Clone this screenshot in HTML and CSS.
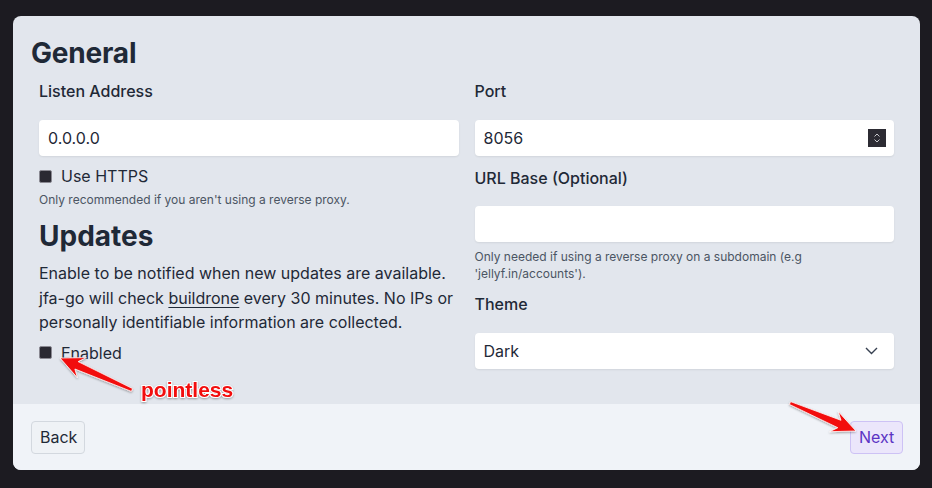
FILE: index.html
```html
<!DOCTYPE html>
<html>
<head>
<meta charset="utf-8">
<link rel="stylesheet" href="styles.css">
</head>
<body>
<div class="card">
  <div class="main">
    <h1 class="title">General</h1>
    <div class="cols">
      <div class="col">
        <div class="label">Listen Address</div>
        <div class="input">0.0.0.0</div>
        <div class="check-row"><span class="box"></span><span>Use HTTPS</span></div>
        <div class="help">Only recommended if you aren't using a reverse proxy.</div>
        <h2 class="section">Updates</h2>
        <p class="para">Enable to be notified when new updates are available. jfa-go will check <u>buildrone</u> every 30 minutes. No IPs or personally identifiable information are collected.</p>
        <div class="check-row check-en"><span class="box"></span><span>Enabled</span></div>
      </div>
      <div class="col">
        <div class="label">Port</div>
        <div class="input input-num"><span>8056</span>
          <svg class="spin" width="18" height="18" viewBox="0 0 18 18"><rect width="18" height="18" fill="#2c2b33"/><path d="M6.5 7.5 L9 5 L11.5 7.5" fill="none" stroke="#c8c8cc" stroke-width="1"/><path d="M6.5 10.5 L9 13 L11.5 10.5" fill="none" stroke="#c8c8cc" stroke-width="1"/></svg>
        </div>
        <div class="label label-gap">URL Base (Optional)</div>
        <div class="input"></div>
        <div class="help help-url">Only needed if using a reverse proxy on a subdomain (e.g 'jellyf.in/accounts').</div>
        <div class="label label-gap2">Theme</div>
        <div class="input input-sel"><span>Dark</span>
          <svg class="chev" width="13" height="8" viewBox="0 0 13 8"><path d="M1 1 L6.5 6.5 L12 1" fill="none" stroke="#374151" stroke-width="1.4"/></svg>
        </div>
      </div>
    </div>
  </div>
  <div class="footer">
    <button class="btn btn-back">Back</button>
    <button class="btn btn-next">Next</button>
  </div>
</div>
<svg class="annot" width="932" height="488" viewBox="0 0 932 488">
  <defs>
    <filter id="sh" x="-20%" y="-20%" width="140%" height="140%">
      <feDropShadow dx="0" dy="1" stdDeviation="1" flood-color="#000" flood-opacity="0.35"/>
    </filter>
  </defs>
  <g filter="url(#sh)">
    <polygon points="132.6,388.6 78.1,361.6 86.4,357.6 60,358 77.4,377.8 74.9,369.0 131.4,391.4" fill="#f20d0d" stroke="#fff" stroke-width="0.8" stroke-linejoin="round"/>
    <polygon points="790.6,401.6 841.0,420.3 838.2,411.5 856,431 829.6,431.7 837.8,427.7 789.4,404.4" fill="#f20d0d" stroke="#fff" stroke-width="0.8" stroke-linejoin="round"/>
    <text x="141" y="397" class="annot-text">pointless</text>
  </g>
</svg>
</body>
</html>
```
FILE: styles.css
```css
html, body {
  margin: 0;
  padding: 0;
}
body {
  background: #1c1b21;
  width: 932px;
  height: 488px;
  overflow: hidden;
  position: relative;
  font-family: Inter, "Noto Sans", sans-serif;
  color: #1f2937;
}
.card {
  position: absolute;
  left: 13px;
  top: 16px;
  width: 907px;
  height: 454px;
  border-radius: 8px;
  overflow: hidden;
  background: #e2e6ed;
  display: flex;
  flex-direction: column;
}
.main {
  height: 388px;
  box-sizing: border-box;
  padding: 20px 18px 0 18px;
}
.title {
  margin: 0;
  font-size: 28px;
  line-height: 34px;
  font-weight: 700;
  letter-spacing: -0.2px;
}
.cols {
  display: grid;
  grid-template-columns: 1fr 1fr;
  margin-top: 9px;
}
.col {
  padding: 0 8px;
  display: flex;
  flex-direction: column;
}
.label {
  font-size: 16px;
  line-height: 24px;
  font-weight: 500;
  margin-bottom: 17px;
}
.label-gap { margin-top: 10px; margin-bottom: 16px; }
.label-gap2 { margin-top: 10px; }
.input {
  height: 36px;
  background: #fff;
  border-radius: 4px;
  box-shadow: 0 1px 2px rgba(0,0,0,0.08);
  box-sizing: border-box;
  padding: 0 9px;
  display: flex;
  align-items: center;
  justify-content: space-between;
  font-size: 16px;
}
.input-num { padding-right: 8px; }
.input-sel { padding-right: 16px; }
.spin { display: block; }
.chev { display: block; }
.check-row {
  display: flex;
  align-items: center;
  gap: 9px;
  font-size: 16px;
  line-height: 24px;
  margin-top: 8px;
}
.box {
  width: 13px;
  height: 13px;
  box-sizing: border-box;
  background: #2a2932;
  border: 1px solid #8a8992;
  border-radius: 2px;
}
.help {
  font-size: 12px;
  line-height: 17px;
  color: #4b5563;
  margin-top: 3px;
}
.help-url { margin-top: 6px; }
.section {
  margin: 11px 0 0 0;
  font-size: 28px;
  line-height: 34px;
  font-weight: 700;
}
.para {
  margin: 8px 0 0 0;
  font-size: 16px;
  line-height: 24.5px;
}
.para u {
  text-underline-offset: 3px;
}
.check-en { margin-top: 6px; }
.footer {
  flex: 1;
  background: #f0f3f8;
  display: flex;
  justify-content: space-between;
  align-items: flex-start;
  padding: 17px 17px 0 18px;
}
.btn {
  font-family: Inter, "Noto Sans", sans-serif;
  font-size: 16px;
  height: 33px;
  box-sizing: border-box;
  border-radius: 4px;
  padding: 0 8px;
  line-height: 31px;
}
.btn-back {
  width: 54px;
  background: #eff2f6;
  border: 1px solid #d3d8df;
  color: #1f2937;
}
.btn-next {
  width: 53px;
  background: #ebe6fb;
  border: 1px solid #cdc2f5;
  color: #5b34c4;
}
.annot {
  position: absolute;
  left: 0;
  top: 0;
  pointer-events: none;
}
.annot-text {
  font-family: "Liberation Sans", Arial, sans-serif;
  font-weight: 700;
  font-size: 21px;
  fill: #f20d0d;
  stroke: #fff;
  stroke-width: 2px;
  paint-order: stroke;
}
```
